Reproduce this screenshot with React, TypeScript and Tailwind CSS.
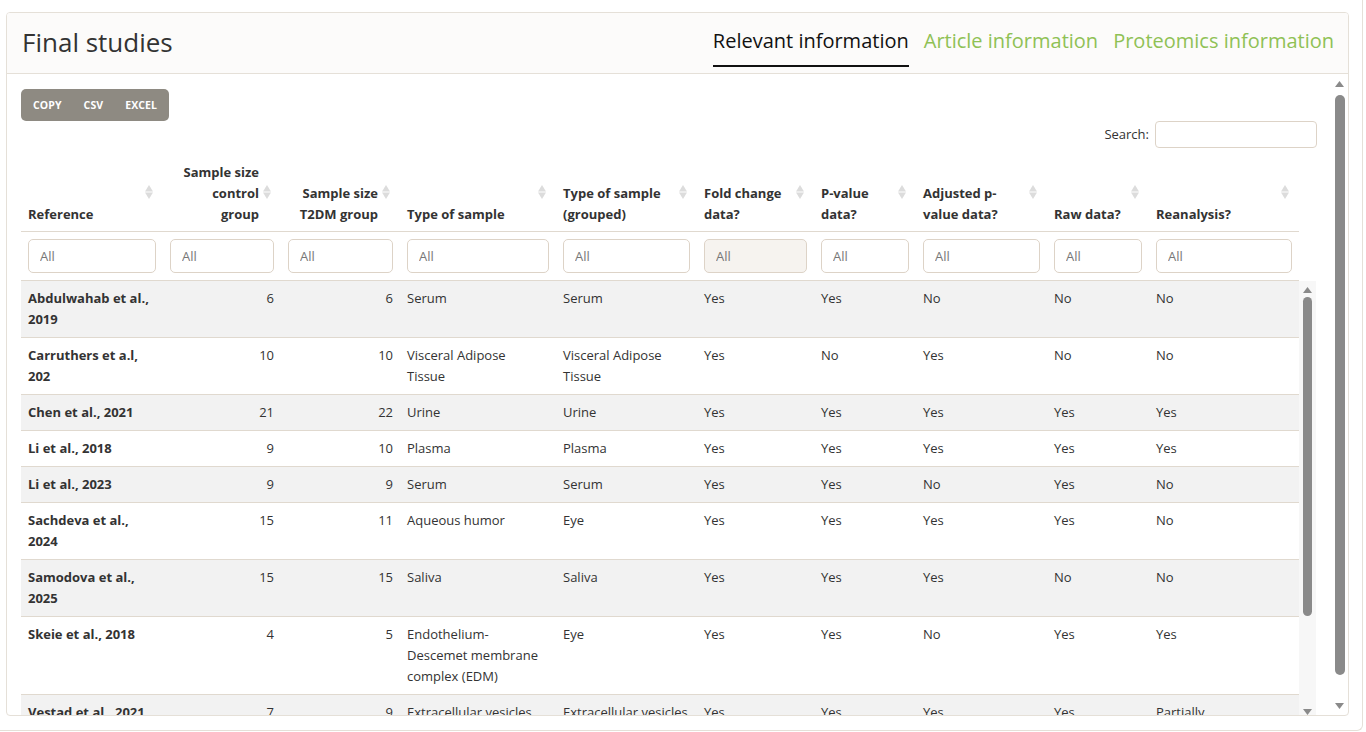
import React from 'react';

type Row = {
  reference: string;
  control: string;
  t2dm: string;
  type: string;
  grouped: string;
  fold: string;
  pvalue: string;
  adjusted: string;
  raw: string;
  reanalysis: string;
};

// line breaks follow how the columns wrap in the original page
const rows: Row[] = [
  { reference: 'Abdulwahab et al., 2019', control: '6', t2dm: '6', type: 'Serum', grouped: 'Serum', fold: 'Yes', pvalue: 'Yes', adjusted: 'No', raw: 'No', reanalysis: 'No' },
  { reference: 'Carruthers et a.l, 202', control: '10', t2dm: '10', type: 'Visceral Adipose\nTissue', grouped: 'Visceral Adipose\nTissue', fold: 'Yes', pvalue: 'No', adjusted: 'Yes', raw: 'No', reanalysis: 'No' },
  { reference: 'Chen et al., 2021', control: '21', t2dm: '22', type: 'Urine', grouped: 'Urine', fold: 'Yes', pvalue: 'Yes', adjusted: 'Yes', raw: 'Yes', reanalysis: 'Yes' },
  { reference: 'Li et al., 2018', control: '9', t2dm: '10', type: 'Plasma', grouped: 'Plasma', fold: 'Yes', pvalue: 'Yes', adjusted: 'Yes', raw: 'Yes', reanalysis: 'Yes' },
  { reference: 'Li et al., 2023', control: '9', t2dm: '9', type: 'Serum', grouped: 'Serum', fold: 'Yes', pvalue: 'Yes', adjusted: 'No', raw: 'Yes', reanalysis: 'No' },
  { reference: 'Sachdeva et al., 2024', control: '15', t2dm: '11', type: 'Aqueous humor', grouped: 'Eye', fold: 'Yes', pvalue: 'Yes', adjusted: 'Yes', raw: 'Yes', reanalysis: 'No' },
  { reference: 'Samodova et al., 2025', control: '15', t2dm: '15', type: 'Saliva', grouped: 'Saliva', fold: 'Yes', pvalue: 'Yes', adjusted: 'Yes', raw: 'No', reanalysis: 'No' },
  { reference: 'Skeie et al., 2018', control: '4', t2dm: '5', type: 'Endothelium-Descemet membrane complex (EDM)', grouped: 'Eye', fold: 'Yes', pvalue: 'Yes', adjusted: 'No', raw: 'Yes', reanalysis: 'Yes' },
  { reference: 'Vestad et al., 2021', control: '7', t2dm: '9', type: 'Extracellular vesicles', grouped: 'Extracellular vesicles', fold: 'Yes', pvalue: 'Yes', adjusted: 'Yes', raw: 'Yes', reanalysis: 'Partially' },
  { reference: 'Zhang et al., 2022', control: '12', t2dm: '12', type: 'Plasma', grouped: 'Plasma', fold: 'Yes', pvalue: 'Yes', adjusted: 'No', raw: 'No', reanalysis: 'No' },
];

const widths = [142, 118, 119, 156, 141, 117, 102, 131, 102, 150];

const headers: { label: string; right?: boolean }[] = [
  { label: 'Reference' },
  { label: 'Sample size\ncontrol\ngroup', right: true },
  { label: 'Sample size\nT2DM group', right: true },
  { label: 'Type of sample' },
  { label: 'Type of sample\n(grouped)' },
  { label: 'Fold change\ndata?' },
  { label: 'P-value\ndata?' },
  { label: 'Adjusted p-\nvalue data?' },
  { label: 'Raw data?' },
  { label: 'Reanalysis?' },
];

const SortIcon = () => (
  <svg width="8" height="14" viewBox="0 0 8 14" className="absolute right-[10px] top-1/2 -translate-y-1/2">
    <polygon points="4,0 8,6.6 0,6.6" fill="#dcdcdc" />
    <polygon points="0,7.4 8,7.4 4,14" fill="#dcdcdc" />
  </svg>
);

const ArrowUp = () => (
  <svg width="9" height="6" viewBox="0 0 9 6">
    <polygon points="4.5,0 9,6 0,6" fill="#8a8a8a" />
  </svg>
);

const ArrowDown = () => (
  <svg width="9" height="6" viewBox="0 0 9 6">
    <polygon points="0,0 9,0 4.5,6" fill="#8a8a8a" />
  </svg>
);

const Cols = () => (
  <colgroup>
    {widths.map((w, i) => (
      <col key={i} style={{ width: w }} />
    ))}
  </colgroup>
);

const FilterInput = ({ shaded }: { shaded?: boolean }) => (
  <input
    readOnly
    placeholder="All"
    className={
      'w-full h-[34px] rounded-[5px] border border-[#ddd3c7] px-[11px] text-[13px] text-[#555] placeholder:text-[#777] outline-none ' +
      (shaded ? 'bg-[#f6f3ef]' : 'bg-white')
    }
  />
);

export default function App() {
  const cells = (r: Row) => [
    r.reference,
    r.control,
    r.t2dm,
    r.type,
    r.grouped,
    r.fold,
    r.pvalue,
    r.adjusted,
    r.raw,
    r.reanalysis,
  ];

  return (
    <div
      className="w-[1366px] h-[732px] bg-white overflow-hidden text-[#333]"
      style={{ fontFamily: '"Open Sans", "Noto Sans", sans-serif' }}
    >
      <div className="w-[1363px] h-[731px] border-r border-b border-[#e5e0d8] rounded-br-[6px] pt-[12px] pl-[6px]">
        {/* Card */}
        <div className="w-[1343px] h-[704px] border border-[#e5e0d8] rounded-[4px] flex flex-col overflow-hidden">
          {/* Card header */}
          <div className="h-[61px] shrink-0 bg-[#fcfbfa] border-b border-[#e5e0d8] flex justify-between pl-[15px] pr-[14px]">
            <h2 className="self-center -mt-[3px] text-[26px] leading-[34px] font-normal text-[#333]">Final studies</h2>
            <nav className="flex gap-[15px] self-start">
              <a className="pt-[14px] pb-[10px] leading-[28px] text-[20px] text-[#111] border-b-2 border-[#111]">
                Relevant information
              </a>
              <a className="pt-[14px] pb-[10px] leading-[28px] text-[20px] text-[#8fc155] border-b-2 border-transparent">
                Article information
              </a>
              <a className="pt-[14px] pb-[10px] leading-[28px] text-[20px] text-[#8fc155] border-b-2 border-transparent">
                Proteomics information
              </a>
            </nav>
          </div>

          {/* Card body */}
          <div className="flex flex-1 min-h-0">
            <div className="flex-1 min-w-0 overflow-hidden pl-[14px] pr-[14px] pt-[15px]">
              {/* Buttons */}
              <div className="inline-flex h-[32px] rounded-[5px] bg-[#8e8a82] px-[1px]">
                {['COPY', 'CSV', 'EXCEL'].map((b) => (
                  <button key={b} className="px-[11px] pt-[1px] text-[10.5px] font-bold text-white tracking-[0.1px]">
                    {b}
                  </button>
                ))}
              </div>

              {/* Search */}
              <div className="flex justify-end items-center gap-[6px] h-[27px]">
                <label className="text-[13px]">Search:</label>
                <input className="w-[162px] h-[27px] rounded-[4px] border border-[#ddd3c7] bg-white outline-none" />
              </div>

              {/* Header table */}
              <table className="table-fixed border-collapse w-[1278px] mt-[4px]">
                <Cols />
                <thead>
                  <tr className="border-b border-[#e0d9cf]">
                    {headers.map((h, i) => (
                      <th
                        key={i}
                        className={
                          'relative align-bottom whitespace-pre-line pt-[10px] pb-[6px] pl-[7px] pr-[22px] text-[13px] leading-[21px] font-bold text-[#333] ' +
                          (h.right ? 'text-right' : 'text-left')
                        }
                      >
                        {h.label}
                        <SortIcon />
                      </th>
                    ))}
                  </tr>
                  <tr className="border-b border-[#e0d9cf]">
                    {headers.map((_, i) => (
                      <th key={i} className="px-[7px] py-[7px] font-normal">
                        <FilterInput shaded={i === 5} />
                      </th>
                    ))}
                  </tr>
                </thead>
              </table>

              {/* Scrolling body */}
              <div className="flex w-[1295px]">
                <table className="table-fixed border-collapse w-[1278px] shrink-0">
                  <Cols />
                  <tbody>
                    {rows.map((r, ri) => (
                      <tr key={ri} className={'border-b border-[#e0d9cf] ' + (ri % 2 === 0 ? 'bg-[#f2f2f2]' : 'bg-white')}>
                        {cells(r).map((c, ci) => (
                          <td
                            key={ci}
                            className={
                              'align-top whitespace-pre-line px-[7px] py-[7px] text-[13px] leading-[21px] text-[#333] ' +
                              (ci === 0 ? 'font-bold ' : '') +
                              (ci === 1 || ci === 2 ? 'text-right' : 'text-left')
                            }
                          >
                            {c}
                          </td>
                        ))}
                      </tr>
                    ))}
                  </tbody>
                </table>
                {/* Inner scrollbar */}
                <div className="w-[17px] h-[440px] bg-[#f7f7f7] flex flex-col items-center pt-[6px] pb-[6px]">
                  <ArrowUp />
                  <div className="mt-[4px] w-[9px] h-[319px] rounded-full bg-[#8a8a8a]" />
                  <div className="flex-1" />
                  <ArrowDown />
                </div>
              </div>
            </div>

            {/* Outer scrollbar */}
            <div className="w-[17px] shrink-0 flex flex-col items-center pt-[7px] pb-[6px]">
              <ArrowUp />
              <div className="mt-[8px] w-[10px] h-[580px] rounded-full bg-[#8a8a8a]" />
              <div className="flex-1" />
              <ArrowDown />
            </div>
          </div>
        </div>
      </div>
    </div>
  );
}
